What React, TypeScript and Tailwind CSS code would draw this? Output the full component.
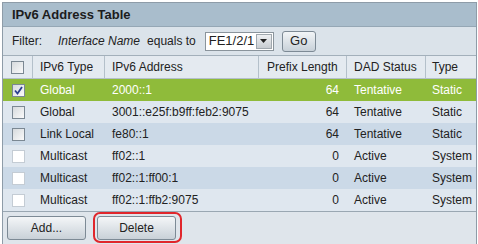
import React from 'react';

type Row = {
  type: string;
  address: string;
  prefix: number;
  dad: string;
  kind: string;
  enabled: boolean;
  checked?: boolean;
};

const rows: Row[] = [
  { type: 'Global', address: '2000::1', prefix: 64, dad: 'Tentative', kind: 'Static', enabled: true, checked: true },
  { type: 'Global', address: '3001::e25f:b9ff:feb2:9075', prefix: 64, dad: 'Tentative', kind: 'Static', enabled: true },
  { type: 'Link Local', address: 'fe80::1', prefix: 64, dad: 'Tentative', kind: 'Static', enabled: true },
  { type: 'Multicast', address: 'ff02::1', prefix: 0, dad: 'Active', kind: 'System', enabled: false },
  { type: 'Multicast', address: 'ff02::1:ff00:1', prefix: 0, dad: 'Active', kind: 'System', enabled: false },
  { type: 'Multicast', address: 'ff02::1:ffb2:9075', prefix: 0, dad: 'Active', kind: 'System', enabled: false },
];

const cols = 'grid grid-cols-[30px_72px_154px_88px_79px_1fr]';

function CheckBox({ enabled, checked }: { enabled: boolean; checked?: boolean }) {
  if (!enabled) {
    return <div className="w-[13px] h-[13px] border border-[#c4ccd4] bg-white" />;
  }
  return (
    <div className="w-[13px] h-[13px] border border-[#7b8893] bg-gradient-to-br from-[#d6dadd] to-[#fafafa] flex items-center justify-center">
      {checked && (
        <svg width="9" height="9" viewBox="0 0 9 9">
          <path d="M1 4.5 L3.5 7.5 L8 1" fill="none" stroke="#2a3f8f" strokeWidth="1.8" />
        </svg>
      )}
    </div>
  );
}

function Button({ label }: { label: string }) {
  return (
    <div className="w-[79px] h-[24px] rounded-[3px] border border-[#7d8a95] bg-gradient-to-b from-[#f4f6f8] to-[#c9d1d8] flex items-center justify-center text-[12px] text-[#222]">
      {label}
    </div>
  );
}

export default function App() {
  return (
    <div className="w-[478px] h-[244px] bg-white pl-[2px] pt-[2px] overflow-hidden font-['Liberation_Sans',Arial,sans-serif] text-[12px] text-[#222]">
      <div className="w-[475px] border border-[#8e9ca8] border-b-0">
        {/* Title */}
        <div className="h-[24px] bg-[#a9bdcc] border-b border-[#95a7b5] flex items-center pl-[9px] font-bold text-[13px] text-[#1c1c1c]">
          IPv6 Address Table
        </div>

        {/* Filter */}
        <div className="h-[29px] bg-[#dbe3ea] border-b border-[#a3b0bb] flex items-center pl-[9px]">
          <span>Filter:</span>
          <span className="ml-[16px] italic">Interface Name</span>
          <span className="ml-[7px]">equals to</span>
          <div className="ml-[9px] h-[19px] w-[69px] border border-[#8a949c] bg-white flex items-center">
            <span className="pl-[3px] flex-1 text-[13px]">FE1/2/1</span>
            <div className="w-[16px] h-[15px] mr-[1px] bg-gradient-to-b from-[#eef0f2] to-[#c7ccd1] border border-[#a0a8ae] flex items-center justify-center">
              <svg width="7" height="4" viewBox="0 0 7 4">
                <path d="M0 0 H7 L3.5 4 Z" fill="#222" />
              </svg>
            </div>
          </div>
          <div className="ml-[8px] w-[34px] h-[21px] rounded-[3px] border border-[#7d8a95] bg-gradient-to-b from-[#f2f5f7] to-[#c8d1d9] flex items-center justify-center text-[13px]">
            Go
          </div>
        </div>

        {/* Header */}
        <div className={`${cols} h-[23px] bg-[#e4eaf0] border-b border-[#b4c0ca]`}>
          <div className="flex items-center justify-center border-r border-[#b4c0ca]">
            <CheckBox enabled />
          </div>
          <div className="flex items-center pl-[7px] border-r border-[#b4c0ca]">IPv6 Type</div>
          <div className="flex items-center pl-[7px] border-r border-[#b4c0ca]">IPv6 Address</div>
          <div className="flex items-center pl-[8px] border-r border-[#b4c0ca]">Prefix Length</div>
          <div className="flex items-center pl-[7px] border-r border-[#b4c0ca]">DAD Status</div>
          <div className="flex items-center pl-[6px]">Type</div>
        </div>

        {/* Rows */}
        {rows.map((r, i) => {
          const bg = r.checked ? 'bg-[#8fbb3a] text-white' : i % 2 === 1 ? 'bg-[#dfe7ef]' : 'bg-[#cbd9e7]';
          return (
            <div key={i} className={`${cols} h-[22px] ${bg}`}>
              <div className="flex items-center justify-center">
                <CheckBox enabled={r.enabled} checked={r.checked} />
              </div>
              <div className="flex items-center pl-[7px]">{r.type}</div>
              <div className="flex items-center pl-[7px] whitespace-nowrap">{r.address}</div>
              <div className="flex items-center justify-end pr-[8px]">{r.prefix}</div>
              <div className="flex items-center pl-[7px]">{r.dad}</div>
              <div className="flex items-center pl-[6px]">{r.kind}</div>
            </div>
          );
        })}

        {/* Footer */}
        <div className="h-[40px] bg-[#dfe5eb] border-t border-[#9aa7b2] flex items-start pt-[4px] pl-[4px] gap-[11px]">
          <Button label="Add..." />
          <div className="relative">
            <Button label="Delete" />
            <div className="absolute -left-[4px] -top-[4px] w-[89px] h-[31px] rounded-[7px] border-2 border-[#e0262b]" />
          </div>
        </div>
      </div>
    </div>
  );
}
